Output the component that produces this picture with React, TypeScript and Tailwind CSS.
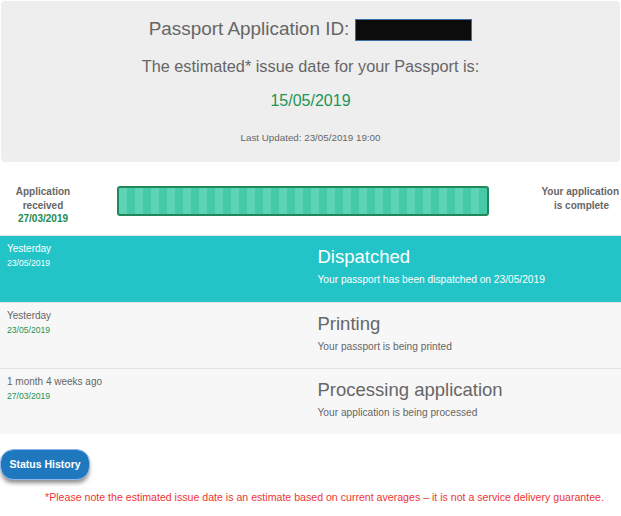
import React from 'react';

const statuses = [
    {
        ago: 'Yesterday',
        date: '23/05/2019',
        title: 'Dispatched',
        text: 'Your passport has been dispatched on 23/05/2019',
        current: true,
    },
    {
        ago: 'Yesterday',
        date: '23/05/2019',
        title: 'Printing',
        text: 'Your passport is being printed',
        current: false,
    },
    {
        ago: '1 month 4 weeks ago',
        date: '27/03/2019',
        title: 'Processing application',
        text: 'Your application is being processed',
        current: false,
    },
];

const App: React.FC = () => {
    return (
        <div className="w-[621px] min-h-[516px] bg-white font-['Liberation_Sans',Arial,sans-serif] text-[#666]">
            {/* Summary panel */}
            <div className="mx-[1px] mt-[1px] h-[161px] rounded-[4px] bg-[#eeeeee] flex flex-col items-center pt-[17px]">
                <div className="flex items-center h-[23px]">
                    <span className="text-[18.9px] leading-none">Passport Application ID:</span>
                    <span className="ml-[6px] inline-block w-[117px] h-[22px] bg-[#0c0c0c] border border-[#3b6ea8]" />
                </div>
                <p className="mt-[15px] text-[16.3px] leading-[20px]">The estimated* issue date for your Passport is:</p>
                <p className="mt-[16px] text-[16px] leading-[18px] text-[#1c9455]">15/05/2019</p>
                <p className="mt-[22px] text-[9.8px] leading-[12px]">Last Updated: 23/05/2019 19:00</p>
            </div>

            {/* Progress */}
            <div className="flex items-start mt-[23px] h-[48px]">
                <div className="w-[86px] text-center text-[10px] font-bold leading-[13.5px]">
                    <p>Application</p>
                    <p>received</p>
                    <p className="text-[#1c8a4c]">27/03/2019</p>
                </div>
                <div className="ml-[31px] mt-[1px] w-[372px] h-[30px] rounded-[3px] border-2 border-[#20885a] bg-[repeating-linear-gradient(90deg,#5dd4b6_0px,#5dd4b6_8px,#45c9a6_8px,#45c9a6_16px)]" />
                <div className="flex-1 text-right pr-[2px] text-[10px] font-bold leading-[13.5px]">
                    <p>Your application</p>
                    <p className="pr-[10px]">is complete</p>
                </div>
            </div>

            {/* Status rows */}
            <div className="mt-[2px] border-t border-[#e3e3e3]">
                {statuses.map((s, i) => (
                    <div
                        key={i}
                        className={`grid grid-cols-2 h-[66px] ${s.current ? 'bg-[#22c4c7] text-white' : 'bg-[#f7f7f7] border-t border-[#e2e2e2]'}`}
                    >
                        <div className="pl-[7px] pt-[6px]">
                            <p className={`text-[10px] leading-[13px] ${s.current ? 'font-medium' : ''}`}>{s.ago}</p>
                            <p className={`mt-[3px] text-[8.6px] leading-[10px] ${s.current ? 'font-medium' : 'text-[#1c9455]'}`}>{s.date}</p>
                        </div>
                        <div className="pl-[7px] pt-[10px]">
                            <p className="text-[18.5px] leading-[22px]">{s.title}</p>
                            <p className="mt-[6px] text-[10.2px] leading-[12px]">{s.text}</p>
                        </div>
                    </div>
                ))}
            </div>

            {/* Button */}
            <div className="mt-[16px] pl-[1px]">
                <button className="w-[88px] h-[29px] rounded-[12px] bg-[#1f78bd] text-white text-[10.5px] font-bold shadow-[0_4px_4px_rgba(0,0,0,0.45)] outline outline-1 outline-[#8fb6ee]">
                    Status History
                </button>
            </div>

            <p className="mt-[11px] text-center text-[10.6px] leading-[14px] text-[#ee3535] pl-[28px]">
                *Please note the estimated issue date is an estimate based on current averages – it is not a service delivery guarantee.
            </p>
        </div>
    );
};

export default App;
